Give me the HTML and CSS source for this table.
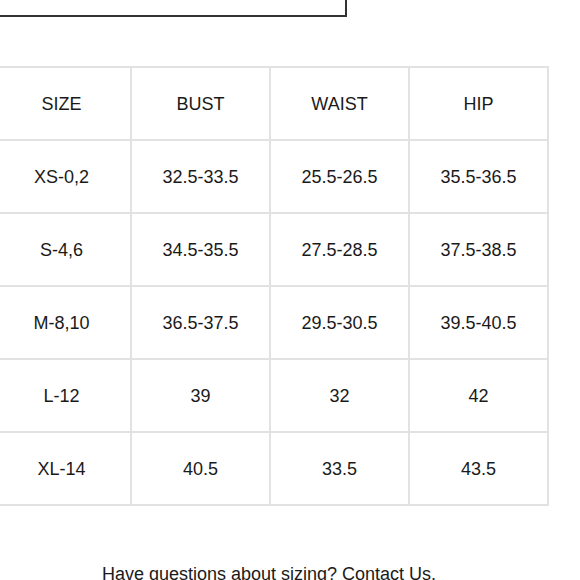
FILE: index.html
```html
<!DOCTYPE html>
<html>
<head>
<meta charset="utf-8">
<link rel="stylesheet" href="styles.css">
</head>
<body>
<div class="page">
  <div class="top-box"></div>
  <table class="size-table">
    <tr><td>SIZE</td><td>BUST</td><td>WAIST</td><td>HIP</td></tr>
    <tr><td>XS-0,2</td><td>32.5-33.5</td><td>25.5-26.5</td><td>35.5-36.5</td></tr>
    <tr><td>S-4,6</td><td>34.5-35.5</td><td>27.5-28.5</td><td>37.5-38.5</td></tr>
    <tr><td>M-8,10</td><td>36.5-37.5</td><td>29.5-30.5</td><td>39.5-40.5</td></tr>
    <tr><td>L-12</td><td>39</td><td>32</td><td>42</td></tr>
    <tr><td>XL-14</td><td>40.5</td><td>33.5</td><td>43.5</td></tr>
  </table>
  <p class="note">Have questions about sizing? Contact Us.</p>
</div>
</body>
</html>
```
FILE: styles.css
```css
html, body {
  margin: 0;
  padding: 0;
  background: #ffffff;
}
body {
  font-family: "Liberation Sans", Arial, sans-serif;
  color: #1a1a1a;
  overflow: hidden;
}
.page {
  margin-left: -9px;
  width: 556px;
}
.top-box {
  width: 356px;
  height: 40px;
  margin-top: -23px;
  border: 2px solid #333333;
  box-sizing: border-box;
}
.size-table {
  margin-top: 49px;
  width: 558px;
  border-collapse: collapse;
  table-layout: fixed;
}
.size-table td {
  border: 2px solid #e2e2e2;
  height: 69px;
  padding: 2px 0 0;
  text-align: center;
  vertical-align: middle;
  font-size: 18px;
}
.note {
  margin: 58px 0 0;
  text-align: center;
  font-size: 18px;
  line-height: 20px;
}
```
